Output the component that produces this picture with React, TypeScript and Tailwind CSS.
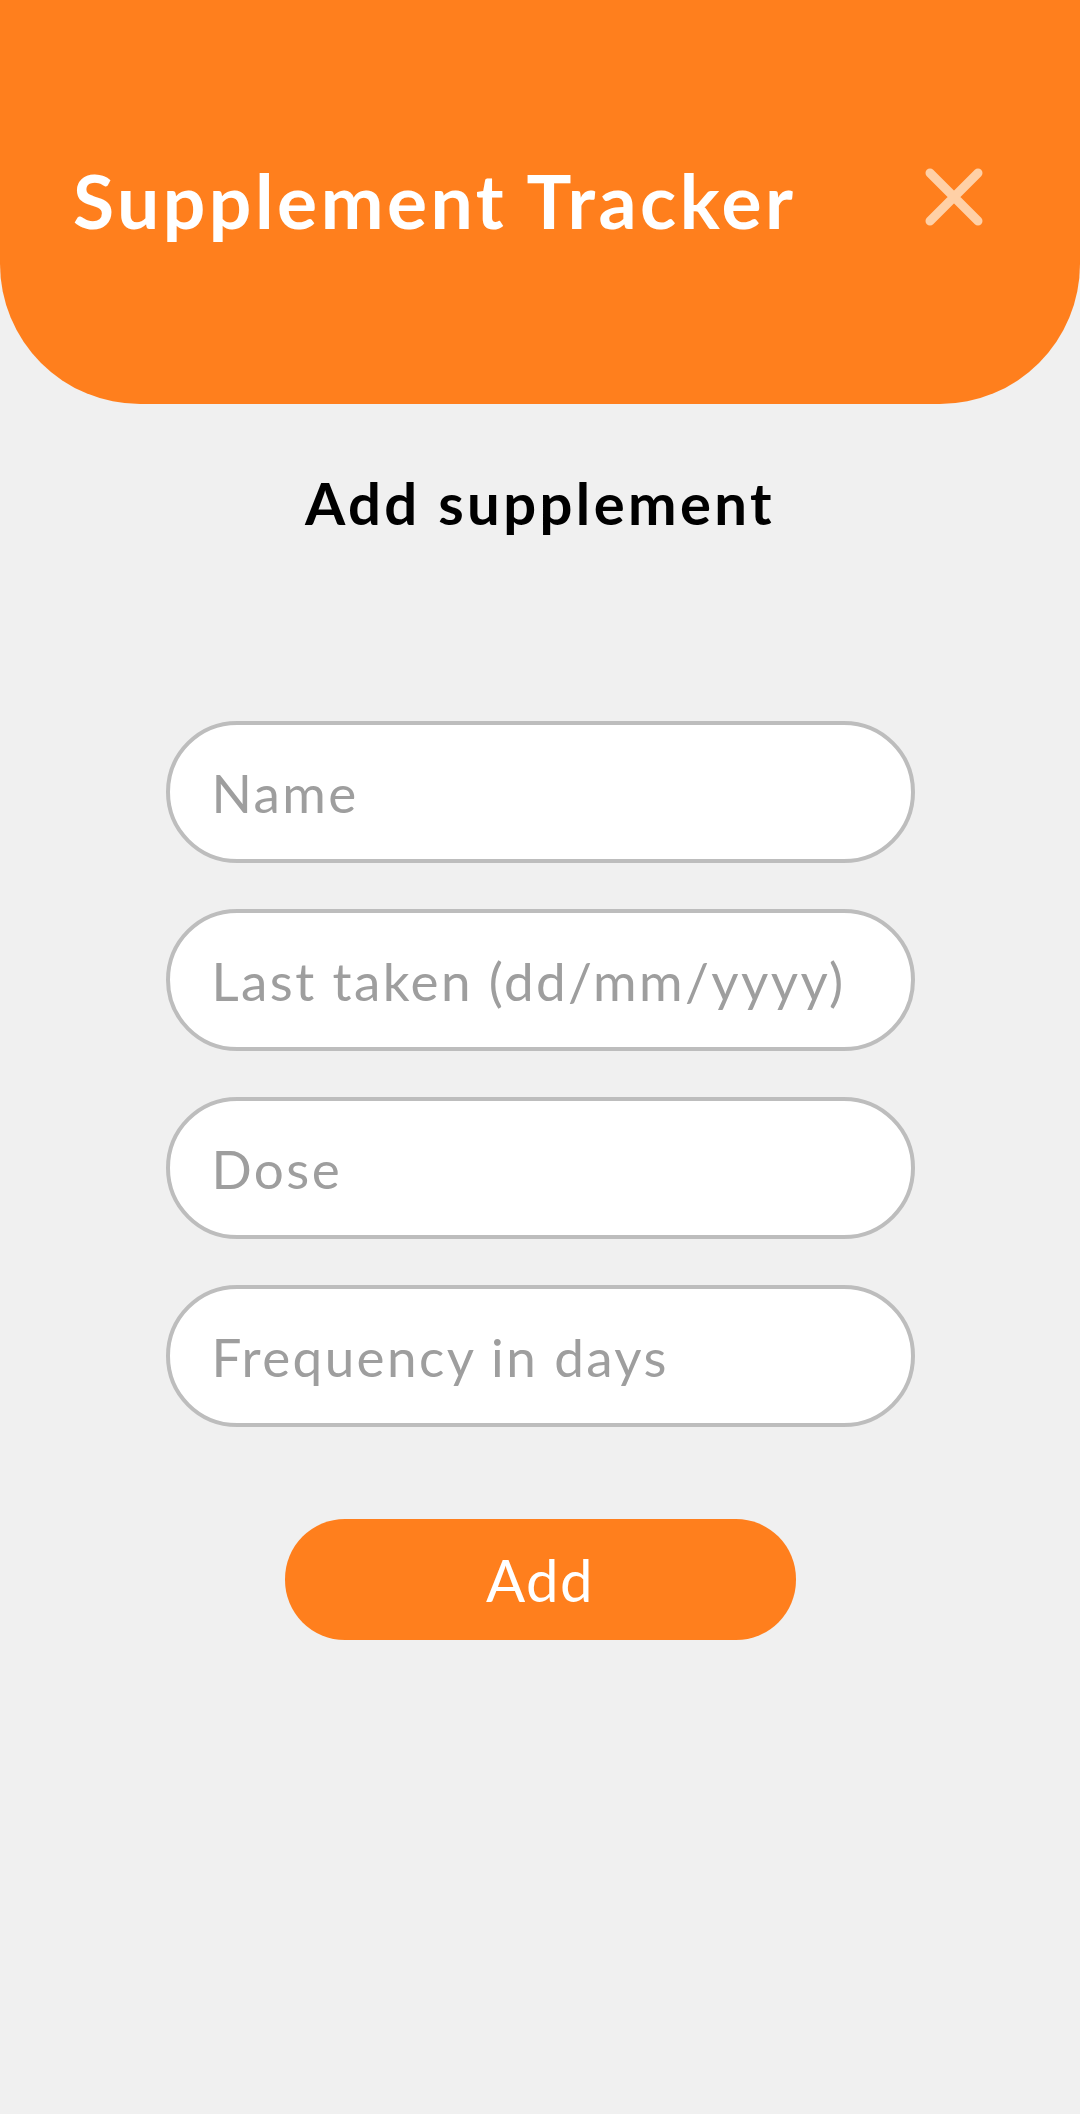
import React from 'react';

const FIELDS = ['Name', 'Last taken (dd/mm/yyyy)', 'Dose', 'Frequency in days'];

const font = { fontFamily: '"Lato", "Noto Sans", sans-serif' };

export default function App() {
  return (
    <div className="min-h-[2114px] w-full bg-[#f0f0f0]" style={font}>
      {/* Header */}
      <header className="flex h-[404px] items-start rounded-b-[140px] bg-[#ff7f1d] pl-[73px] pr-[97px] pt-[160px]">
        <h1 className="text-[75px] font-bold leading-[80px] tracking-[3.5px] text-white">Supplement Tracker</h1>
        <button className="ml-auto mt-[8px] flex h-[58px] w-[58px] items-center justify-center">
          <svg width="58" height="58" viewBox="0 0 58 58" fill="none">
            <path d="M5 5 L53 53 M53 5 L5 53" stroke="#ffd0a6" strokeWidth="9" strokeLinecap="round" />
          </svg>
        </button>
      </header>

      <h2 className="mt-[64px] text-center text-[58px] font-bold leading-[70px] tracking-[3.4px] text-black">
        Add supplement
      </h2>

      {/* Form */}
      <form className="mx-auto mt-[183px] flex w-[749px] flex-col gap-[46px]" onSubmit={(e) => e.preventDefault()}>
        {FIELDS.map((f) => (
          <input
            key={f}
            placeholder={f}
            className="h-[142px] w-full rounded-full border-4 border-[#bdbdbd] bg-white pl-[42px] pr-[30px] text-[53px] tracking-[2.4px] text-black outline-none placeholder:text-[#9e9e9e]"
          />
        ))}
        <button
          type="submit"
          className="mx-auto mt-[46px] h-[121px] w-[511px] rounded-[60px] bg-[#ff7f1d] text-[58px] leading-none tracking-[1.5px] text-white"
        >
          Add
        </button>
      </form>
    </div>
  );
}
